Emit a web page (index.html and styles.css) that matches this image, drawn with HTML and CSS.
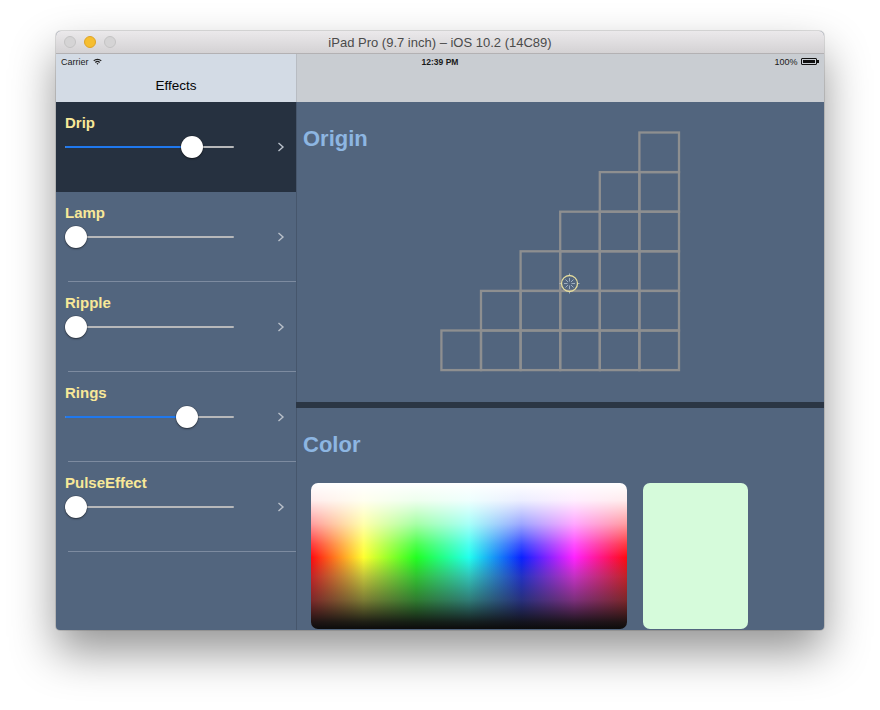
FILE: index.html
```html
<!DOCTYPE html>
<html>
<head>
<meta charset="utf-8">
<link rel="stylesheet" href="styles.css">
</head>
<body>
<div class="window">
  <div class="titlebar">
    <div class="lights">
      <span class="light grey"></span>
      <span class="light yellow"></span>
      <span class="light grey"></span>
    </div>
    <div class="title">iPad Pro (9.7 inch) – iOS 10.2 (14C89)</div>
  </div>
  <div class="screen">
    <div class="statusbar">
      <div class="sb-left">Carrier
        <svg class="wifi" width="9" height="7" viewBox="0 0 9 7"><path d="M0.3 2.4 A6 6 0 0 1 8.7 2.4 L7.8 3.3 A4.7 4.7 0 0 0 1.2 3.3 Z M1.9 4 A3.6 3.6 0 0 1 7.1 4 L6.2 4.9 A2.3 2.3 0 0 0 2.8 4.9 Z M3.5 5.6 A1.4 1.4 0 0 1 5.5 5.6 L4.5 6.7 Z" fill="#222"/></svg>
      </div>
      <div class="sb-center">12:39 PM</div>
      <div class="sb-right">100%
        <span class="battery"><span class="batt-fill"></span></span><span class="batt-tip"></span>
      </div>
    </div>
    <div class="split">
      <div class="sidebar">
        <div class="navbar side-nav"><span>Effects</span></div>
        <div class="list">
          <div class="row selected">
            <div class="label">Drip</div>
            <div class="control">
              <div class="slider" style="--v:0.79"><div class="track"></div><div class="fill"></div><div class="thumb"></div></div>
              <svg class="chev" width="8" height="10" viewBox="0 0 8 10"><polyline points="1.5,1 6,5 1.5,9" fill="none" stroke="#b9c0ca" stroke-width="1.4"/></svg>
            </div>
          </div>
          <div class="row">
            <div class="label">Lamp</div>
            <div class="control">
              <div class="slider" style="--v:0"><div class="track"></div><div class="fill"></div><div class="thumb"></div></div>
              <svg class="chev" width="8" height="10" viewBox="0 0 8 10"><polyline points="1.5,1 6,5 1.5,9" fill="none" stroke="#b9c0ca" stroke-width="1.4"/></svg>
            </div>
          </div>
          <div class="row">
            <div class="label">Ripple</div>
            <div class="control">
              <div class="slider" style="--v:0"><div class="track"></div><div class="fill"></div><div class="thumb"></div></div>
              <svg class="chev" width="8" height="10" viewBox="0 0 8 10"><polyline points="1.5,1 6,5 1.5,9" fill="none" stroke="#b9c0ca" stroke-width="1.4"/></svg>
            </div>
          </div>
          <div class="row">
            <div class="label">Rings</div>
            <div class="control">
              <div class="slider" style="--v:0.755"><div class="track"></div><div class="fill"></div><div class="thumb"></div></div>
              <svg class="chev" width="8" height="10" viewBox="0 0 8 10"><polyline points="1.5,1 6,5 1.5,9" fill="none" stroke="#b9c0ca" stroke-width="1.4"/></svg>
            </div>
          </div>
          <div class="row">
            <div class="label">PulseEffect</div>
            <div class="control">
              <div class="slider" style="--v:0"><div class="track"></div><div class="fill"></div><div class="thumb"></div></div>
              <svg class="chev" width="8" height="10" viewBox="0 0 8 10"><polyline points="1.5,1 6,5 1.5,9" fill="none" stroke="#b9c0ca" stroke-width="1.4"/></svg>
            </div>
          </div>
        </div>
      </div>
      <div class="detail">
        <div class="navbar detail-nav"></div>
        <div class="origin">
          <h2 class="heading">Origin</h2>
          <svg class="grid" width="242" height="242" viewBox="0 0 242 242">
            <g fill="none" stroke="#8e8f90" stroke-width="2.3">
              <rect x="199.4" y="1.5" width="39.6" height="39.6"/>
              <rect x="159.8" y="41.1" width="39.6" height="39.6"/><rect x="199.4" y="41.1" width="39.6" height="39.6"/>
              <rect x="120.2" y="80.7" width="39.6" height="39.6"/><rect x="159.8" y="80.7" width="39.6" height="39.6"/><rect x="199.4" y="80.7" width="39.6" height="39.6"/>
              <rect x="80.6" y="120.3" width="39.6" height="39.6"/><rect x="120.2" y="120.3" width="39.6" height="39.6"/><rect x="159.8" y="120.3" width="39.6" height="39.6"/><rect x="199.4" y="120.3" width="39.6" height="39.6"/>
              <rect x="41" y="159.9" width="39.6" height="39.6"/><rect x="80.6" y="159.9" width="39.6" height="39.6"/><rect x="120.2" y="159.9" width="39.6" height="39.6"/><rect x="159.8" y="159.9" width="39.6" height="39.6"/><rect x="199.4" y="159.9" width="39.6" height="39.6"/>
              <rect x="1.4" y="199.5" width="39.6" height="39.6"/><rect x="41" y="199.5" width="39.6" height="39.6"/><rect x="80.6" y="199.5" width="39.6" height="39.6"/><rect x="120.2" y="199.5" width="39.6" height="39.6"/><rect x="159.8" y="199.5" width="39.6" height="39.6"/><rect x="199.4" y="199.5" width="39.6" height="39.6"/>
            </g>
            <g transform="translate(129.5 152.5)">
              <g stroke="#a9b8c6" stroke-width="0.9">
                <line x1="0" y1="-2" x2="0" y2="-5.5"/><line x1="0" y1="2" x2="0" y2="5.5"/>
                <line x1="-2" y1="0" x2="-5.5" y2="0"/><line x1="2" y1="0" x2="5.5" y2="0"/>
                <line x1="1.5" y1="1.5" x2="4" y2="4"/><line x1="-1.5" y1="-1.5" x2="-4" y2="-4"/>
                <line x1="1.5" y1="-1.5" x2="4" y2="-4"/><line x1="-1.5" y1="1.5" x2="-4" y2="4"/>
                <line x1="0" y1="-8" x2="0" y2="-10"/><line x1="0" y1="8" x2="0" y2="10"/>
                <line x1="-8" y1="0" x2="-10" y2="0"/><line x1="8" y1="0" x2="10" y2="0"/>
              </g>
              <circle r="8" fill="none" stroke="#e6dd9d" stroke-width="1.3"/>
            </g>
          </svg>
        </div>
        <div class="divider"></div>
        <div class="color">
          <h2 class="heading">Color</h2>
          <div class="pickers">
            <div class="picker"></div>
            <div class="swatch"></div>
          </div>
        </div>
      </div>
    </div>
  </div>
</div>
</body>
</html>
```

FILE: styles.css
```css
html, body {
  margin: 0;
  padding: 0;
  background: #ffffff;
}
body {
  width: 880px;
  height: 710px;
  overflow: hidden;
  padding: 31px 0 0 56px;
  box-sizing: border-box;
  font-family: "Liberation Sans", Arial, sans-serif;
}
.window {
  width: 768px;
  height: 599px;
  border-radius: 5px 5px 4px 4px;
  overflow: hidden;
  background: #52657e;
  box-shadow: 0 22px 45px rgba(0, 0, 0, 0.42), 0 0 0 1px rgba(0, 0, 0, 0.12);
  display: flex;
  flex-direction: column;
}
.titlebar {
  height: 22px;
  flex: none;
  background: linear-gradient(#ebe9eb, #d4d2d4);
  border-bottom: 1px solid #b3b1b3;
  display: flex;
  align-items: center;
  position: relative;
}
.lights {
  display: flex;
  gap: 8px;
  padding-left: 8px;
}
.light {
  width: 12px;
  height: 12px;
  border-radius: 50%;
  box-sizing: border-box;
}
.light.grey {
  background: #d5d4d5;
  border: 1px solid #c4c3c4;
}
.light.yellow {
  background: #f6be30;
  border: 1px solid #dea326;
}
.title {
  position: absolute;
  left: 0;
  right: 0;
  top: 0;
  line-height: 23px;
  text-align: center;
  font-size: 13px;
  color: #4b4b4b;
}
.screen {
  flex: 1;
  position: relative;
  display: flex;
  flex-direction: column;
  min-height: 0;
}
.statusbar {
  position: absolute;
  top: 0;
  left: 0;
  right: 0;
  height: 15px;
  display: flex;
  justify-content: space-between;
  align-items: center;
  padding: 0 5px;
  font-size: 9px;
  color: #1a1a1a;
  z-index: 2;
}
.sb-left {
  display: flex;
  align-items: center;
  gap: 4px;
  width: 120px;
}
.sb-center {
  font-weight: bold;
  font-size: 8.5px;
}
.sb-right {
  display: flex;
  align-items: center;
  justify-content: flex-end;
  width: 120px;
}
.battery {
  margin-left: 4px;
  width: 16px;
  height: 7px;
  border: 1px solid #111;
  box-sizing: border-box;
  border-radius: 1px;
  padding: 1px;
  display: flex;
}
.batt-fill {
  flex: 1;
  background: #111;
}
.batt-tip {
  width: 1.5px;
  height: 3px;
  background: #111;
}
.split {
  flex: 1;
  display: flex;
  min-height: 0;
}
.sidebar {
  width: 240px;
  flex: none;
  display: flex;
  flex-direction: column;
}
.navbar {
  height: 48px;
  flex: none;
  box-sizing: border-box;
  padding-top: 15px;
}
.side-nav {
  background: #d3dbe5;
  display: flex;
  align-items: center;
  justify-content: center;
  font-size: 13.5px;
  color: #050505;
}
.detail-nav {
  background: #c9cdd2;
  border-left: 1px solid #b8bcc2;
}
.list {
  flex: 1;
}
.row {
  height: 90px;
  box-sizing: border-box;
  padding: 12px 0 0 0;
  position: relative;
  border-bottom: 1px solid #7d8ba0;
  margin-left: 12px;
}
.row .label, .row .control {
  margin-left: -3px;
}
.row.selected {
  background: #263140;
  margin-left: 0;
  padding-left: 12px;
  border-bottom-color: #263140;
}
.label {
  font-size: 15px;
  font-weight: bold;
  color: #f8e898;
  line-height: 18px;
}
.control {
  display: flex;
  align-items: center;
  margin-top: 4px;
  height: 22px;
}
.slider {
  position: relative;
  width: 169px;
  height: 22px;
}
.track {
  position: absolute;
  left: 0;
  right: 0;
  top: 10px;
  height: 2px;
  border-radius: 1px;
  background: #b7b8ba;
}
.fill {
  position: absolute;
  left: 0;
  top: 10px;
  height: 2px;
  border-radius: 1px;
  width: calc(var(--v) * 147px + 11px);
  background: #1f78ee;
}
.thumb {
  position: absolute;
  top: 0;
  left: calc(var(--v) * 147px);
  width: 22px;
  height: 22px;
  border-radius: 50%;
  background: #ffffff;
  box-shadow: 0 1px 2px rgba(0, 0, 0, 0.45), 0 0 0 0.5px rgba(0, 0, 0, 0.25);
}
.chev {
  margin-left: 43px;
}
.detail {
  flex: 1;
  display: flex;
  flex-direction: column;
  min-width: 0;
}
.origin {
  height: 300px;
  flex: none;
  display: grid;
  border-left: 1px solid #46566c;
}
.origin > * {
  grid-area: 1 / 1;
}
.heading {
  margin: 0;
  font-size: 22px;
  font-weight: bold;
  color: #8db6e2;
  padding: 25px 0 0 6px;
  line-height: 24px;
  align-self: start;
}
.grid {
  margin: 29px 0 0 143px;
  align-self: start;
}
.divider {
  height: 6px;
  flex: none;
  background: #2b3644;
}
.color {
  flex: 1;
  border-left: 1px solid #46566c;
  min-height: 0;
}
.color .heading {
  padding-top: 25px;
}
.pickers {
  display: flex;
  gap: 16px;
  padding: 26px 0 0 14px;
}
.picker {
  width: 316px;
  height: 146px;
  border-radius: 7px;
  background:
    linear-gradient(to bottom,
      #ffffff 0%,
      rgba(255, 255, 255, 0.92) 12%,
      rgba(255, 255, 255, 0.6) 28%,
      rgba(255, 255, 255, 0.2) 42%,
      rgba(255, 255, 255, 0) 51%,
      rgba(80, 80, 80, 0) 51%,
      rgba(80, 80, 80, 0.35) 64%,
      rgba(55, 55, 55, 0.65) 80%,
      rgba(20, 20, 20, 0.95) 95%,
      #0c0c0c 100%),
    linear-gradient(to right, #ff0a10 0%, #ffff30 16.67%, #22ff22 33.33%, #22ffee 50%, #0a22ff 66.67%, #ff22ff 83.33%, #ff0a10 100%);
}
.swatch {
  width: 105px;
  height: 146px;
  border-radius: 7px;
  background: #d6fbdb;
}
```
